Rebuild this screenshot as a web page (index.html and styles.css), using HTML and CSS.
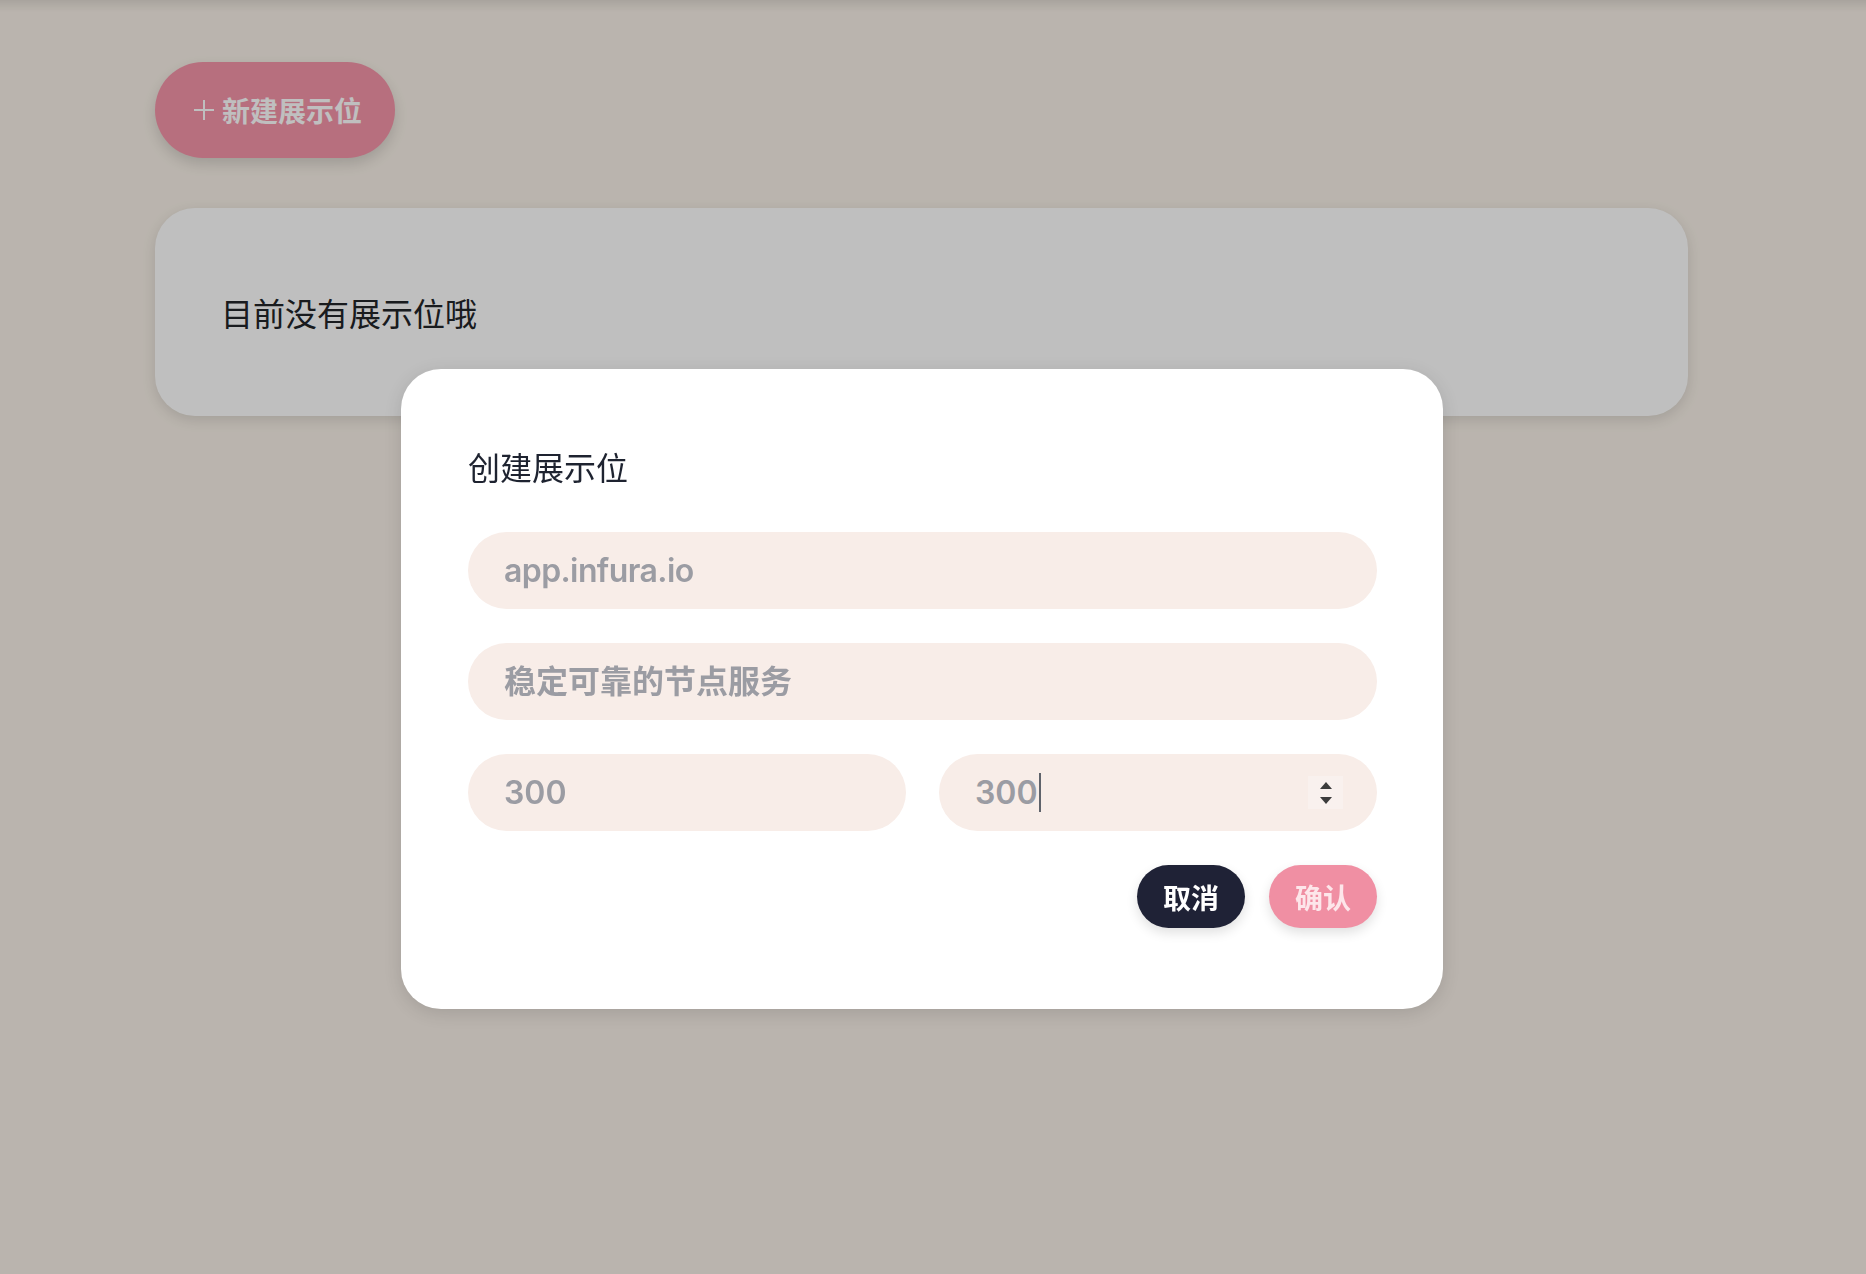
FILE: index.html
```html
<!DOCTYPE html>
<html lang="zh-CN">
<head>
<meta charset="utf-8">
<title>展示位</title>
<link rel="stylesheet" href="styles.css">
</head>
<body>
<main class="page">
  <button class="new-btn" type="button">
    <svg class="plus" viewBox="0 0 22 22" width="22" height="22" aria-hidden="true"><path d="M11 1v20M1 11h20" stroke="currentColor" stroke-width="2" fill="none"/></svg>
    <span>新建展示位</span>
  </button>
  <section class="empty-card">
    <p class="empty-text">目前没有展示位哦</p>
  </section>
</main>
<div class="overlay"></div>
<div class="modal" role="dialog" aria-labelledby="modal-title">
  <h2 class="modal-title" id="modal-title">创建展示位</h2>
  <form class="form">
    <input class="field field-url" type="text" placeholder="app.infura.io">
    <input class="field" type="text" placeholder="稳定可靠的节点服务">
    <div class="row">
      <input class="field" type="text" placeholder="300">
      <div class="field field-number" role="spinbutton" aria-valuenow="300">
        <span class="value">300</span><span class="caret"></span>
        <span class="spinner">
          <svg viewBox="0 0 14 28" width="14" height="28" aria-hidden="true">
            <path d="M7 3L13 10H1Z" fill="#3c3c3c"/>
            <path d="M1 18H13L7 25Z" fill="#3c3c3c"/>
          </svg>
        </span>
      </div>
    </div>
    <div class="actions">
      <button class="btn btn-cancel" type="button">取消</button>
      <button class="btn btn-confirm" type="button">确认</button>
    </div>
  </form>
</div>
</body>
</html>
```

FILE: styles.css
```css
html, body {
  margin: 0;
  padding: 0;
}

body {
  min-height: 100vh;
  background: #f8f1e8;
  font-family: Inter, "Noto Sans CJK SC", sans-serif;
}

.page {
  display: flex;
  flex-direction: column;
  align-items: flex-start;
  gap: 50px;
  padding: 62px 0 0 155px;
}

.new-btn {
  display: flex;
  align-items: center;
  gap: 7px;
  height: 96px;
  padding: 0 33px 0 38px;
  border: none;
  border-radius: 48px;
  background: #f594a9;
  color: #ffffff;
  font-family: inherit;
  font-size: 28px;
  font-weight: 700;
  box-shadow: 0 6px 14px rgba(0, 0, 0, 0.14);
}

.plus {
  display: block;
}

.empty-card {
  box-sizing: border-box;
  display: flex;
  align-items: center;
  width: 1533px;
  height: 208px;
  padding: 0 66px;
  background: #ffffff;
  border-radius: 40px;
  box-shadow: 0 4px 14px rgba(0, 0, 0, 0.12);
}

.empty-text {
  margin: 0;
  font-size: 32px;
  color: #222428;
}

.overlay {
  position: fixed;
  inset: 0;
  background:
    linear-gradient(to bottom, rgba(0, 0, 0, 0.09), rgba(0, 0, 0, 0) 12px),
    rgba(0, 0, 0, 0.25);
}

.modal {
  position: absolute;
  left: 401px;
  top: 369px;
  box-sizing: border-box;
  width: 1042px;
  padding: 78px 66px 81px 67px;
  background: #ffffff;
  border-radius: 40px;
  box-shadow: 0 4px 18px rgba(0, 0, 0, 0.12);
}

.modal-title {
  margin: 0 0 41px;
  font-size: 32px;
  line-height: 44px;
  font-weight: 400;
  color: #1e2330;
}

.form {
  display: flex;
  flex-direction: column;
  gap: 34px;
}

.field {
  box-sizing: border-box;
  width: 100%;
  height: 77px;
  padding: 0 36px;
  border: none;
  border-radius: 39px;
  background: #f8ede8;
  font-family: inherit;
  font-size: 32px;
  font-weight: 600;
  color: #9b9ca3;
  outline: none;
}

.field::placeholder {
  color: #9b9ca3;
  opacity: 1;
}

.field-url {
  letter-spacing: -0.6px;
}

.row {
  display: grid;
  grid-template-columns: 1fr 1fr;
  gap: 33px;
}

.field-number {
  display: flex;
  align-items: center;
  padding-right: 34px;
}

.caret {
  width: 2px;
  height: 39px;
  margin-left: 1px;
  background: #5f636b;
}

.spinner {
  display: flex;
  align-items: center;
  justify-content: center;
  width: 35px;
  height: 33px;
  margin-left: auto;
  background: #f9f1ee;
}

.actions {
  display: flex;
  justify-content: flex-end;
  gap: 24px;
}

.btn {
  height: 63px;
  padding: 0 26px;
  border: none;
  border-radius: 32px;
  font-family: inherit;
  font-size: 28px;
  font-weight: 700;
  box-shadow: 0 5px 12px rgba(0, 0, 0, 0.12);
}

.btn-cancel {
  background: #1f2236;
  color: #ffffff;
}

.btn-confirm {
  background: #f08fa3;
  color: #fde6ea;
}
```
